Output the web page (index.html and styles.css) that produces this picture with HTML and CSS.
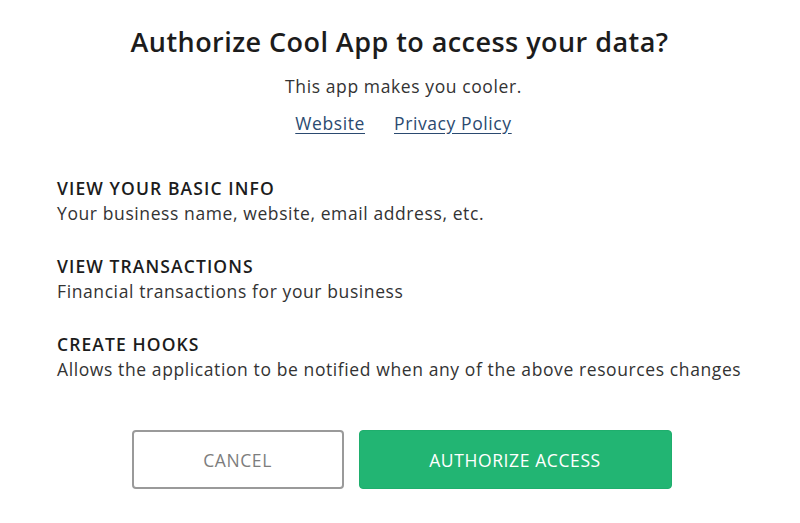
FILE: index.html
```html
<!DOCTYPE html>
<html>
<head>
<meta charset="utf-8">
<link rel="stylesheet" href="styles.css">
</head>
<body>
<div class="dialog">
  <h1 class="title">Authorize Cool App to access your data?</h1>
  <p class="subtitle">This app makes you cooler.</p>
  <div class="links">
    <a class="link" href="#">Website</a>
    <a class="link" href="#">Privacy Policy</a>
  </div>
  <ul class="scopes">
    <li class="scope">
      <div class="scope-name">VIEW YOUR BASIC INFO</div>
      <div class="scope-desc">Your business name, website, email address, etc.</div>
    </li>
    <li class="scope">
      <div class="scope-name">VIEW TRANSACTIONS</div>
      <div class="scope-desc">Financial transactions for your business</div>
    </li>
    <li class="scope">
      <div class="scope-name">CREATE HOOKS</div>
      <div class="scope-desc">Allows the application to be notified when any of the above resources changes</div>
    </li>
  </ul>
  <div class="actions">
    <button class="btn btn-cancel">CANCEL</button>
    <button class="btn btn-primary">AUTHORIZE ACCESS</button>
  </div>
</div>
</body>
</html>
```
FILE: styles.css
```css
* { box-sizing: border-box; }
html, body { margin: 0; padding: 0; background: #fff; }
body {
  font-family: "Open Sans", "Liberation Sans", sans-serif;
  color: #1c1c1c;
}
.dialog {
  width: 700px;
  margin: 0 auto;
  padding-top: 24px;
  padding-left: 7px;
  display: flex;
  flex-direction: column;
}
.title {
  margin: 0 8px 0 0;
  text-align: center;
  font-size: 27px;
  font-weight: 600;
  letter-spacing: 0.45px;
  line-height: 36px;
  color: #1c1c1c;
}
.subtitle {
  margin: 14px 0 0;
  text-align: center;
  font-size: 17.5px;
  letter-spacing: 0.6px;
  line-height: 24px;
  color: #333;
}
.links {
  margin-top: 13px;
  display: flex;
  justify-content: center;
  gap: 29px;
}
.link {
  font-size: 17.5px;
  letter-spacing: 0.6px;
  line-height: 24px;
  color: #2b4a70;
  text-decoration: underline;
  text-underline-offset: 3px;
}
.scopes {
  list-style: none;
  margin: 41px 0 0;
  padding: 0;
  display: flex;
  flex-direction: column;
  gap: 28px;
}
.scope-name {
  font-size: 17.5px;
  font-weight: 600;
  letter-spacing: 1.1px;
  line-height: 25px;
  color: #1c1c1c;
}
.scope-desc {
  font-size: 17.5px;
  letter-spacing: 0.6px;
  line-height: 25px;
  color: #333;
}
.actions {
  margin-top: 48px;
  display: flex;
  justify-content: center;
  gap: 15px;
  padding-right: 4px;
}
.btn {
  height: 59px;
  border-radius: 4px;
  font-family: inherit;
  font-size: 17.5px;
  letter-spacing: 0.6px;
  cursor: pointer;
}
.btn-cancel {
  width: 212px;
  background: #fff;
  border: 2px solid #9a9a9a;
  color: #7d7d7d;
}
.btn-primary {
  width: 313px;
  background: #22b573;
  border: 1px solid #1fae6d;
  color: #fff;
}
```
